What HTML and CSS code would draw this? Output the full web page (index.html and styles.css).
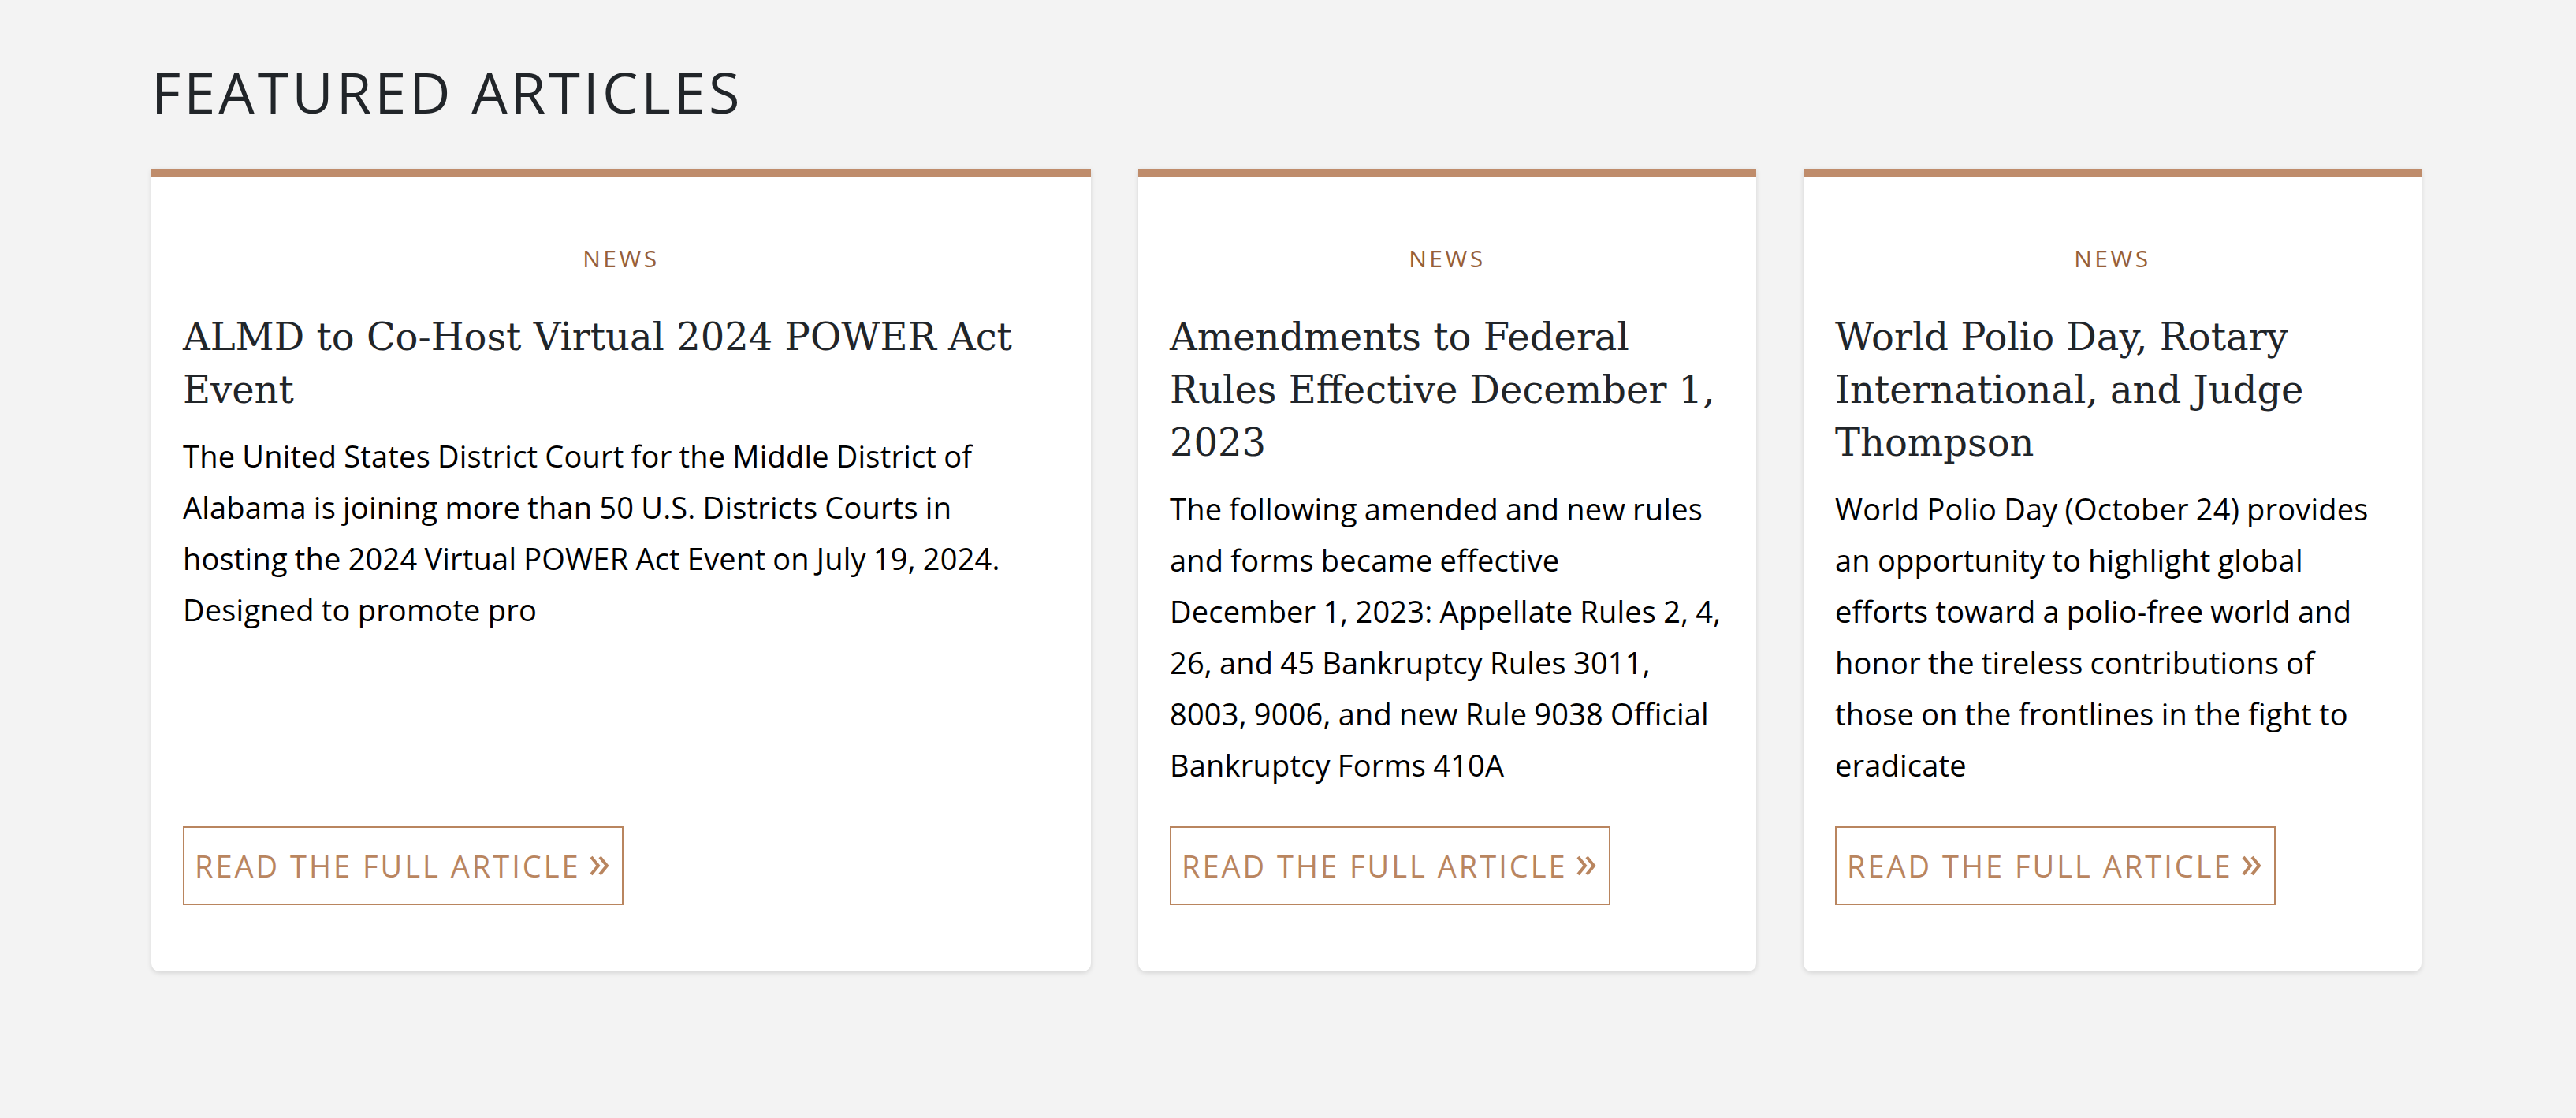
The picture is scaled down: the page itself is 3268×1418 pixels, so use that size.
FILE: index.html
```html
<!DOCTYPE html>
<html lang="en">
<head>
<meta charset="utf-8">
<title>Featured Articles</title>
<link rel="stylesheet" href="styles.css">
</head>
<body>
<section class="featured">
  <h2 class="featured-title">FEATURED ARTICLES</h2>
  <div class="cards">
    <article class="card">
      <div class="card-category">NEWS</div>
      <h3 class="card-title">ALMD to Co-Host Virtual 2024 POWER Act Event</h3>
      <p class="card-text">The United States District Court for the Middle District of Alabama is joining more than 50 U.S. Districts Courts in hosting the 2024 Virtual POWER Act Event on July 19, 2024. Designed to promote pro</p>
      <a class="card-button" href="#">READ THE FULL ARTICLE <svg class="chev" viewBox="0 0 26 28" aria-hidden="true"><polyline points="3,3 12,14 3,25"/><polyline points="14,3 23,14 14,25"/></svg></a>
    </article>
    <article class="card">
      <div class="card-category">NEWS</div>
      <h3 class="card-title">Amendments to Federal Rules Effective December 1, 2023</h3>
      <p class="card-text">The following amended and new rules and forms became effective December&nbsp;1,&nbsp;2023: Appellate Rules 2, 4, 26, and 45 Bankruptcy Rules 3011, 8003, 9006, and new Rule 9038 Official Bankruptcy Forms 410A</p>
      <a class="card-button" href="#">READ THE FULL ARTICLE <svg class="chev" viewBox="0 0 26 28" aria-hidden="true"><polyline points="3,3 12,14 3,25"/><polyline points="14,3 23,14 14,25"/></svg></a>
    </article>
    <article class="card">
      <div class="card-category">NEWS</div>
      <h3 class="card-title">World Polio Day, Rotary International, and Judge Thompson</h3>
      <p class="card-text">World Polio Day (October 24) provides an opportunity to highlight global efforts toward a polio-free world and honor the tireless contributions of those on the frontlines in the fight to eradicate</p>
      <a class="card-button" href="#">READ THE FULL ARTICLE <svg class="chev" viewBox="0 0 26 28" aria-hidden="true"><polyline points="3,3 12,14 3,25"/><polyline points="14,3 23,14 14,25"/></svg></a>
    </article>
  </div>
</section>
</body>
</html>
```

FILE: styles.css
```css
html, body {
  margin: 0;
  padding: 0;
  background: #f3f3f3;
}

body {
  font-family: "Open Sans", "Noto Sans", sans-serif;
  color: #000;
}

.featured {
  padding: 73px 196px 100px 192px;
}

.featured-title {
  margin: 0 0 55px;
  font-family: "Open Sans", "Noto Sans", sans-serif;
  font-weight: 400;
  font-size: 72px;
  line-height: 86px;
  letter-spacing: 4px;
  color: #212529;
}

.cards {
  display: grid;
  grid-template-columns: 1192px 784px 784px;
  column-gap: 60px;
  align-items: stretch;
}

.card {
  display: flex;
  flex-direction: column;
  background: #fff;
  border-top: 10px solid #bf8c6b;
  border-radius: 0 0 10px 10px;
  box-shadow: 0 2px 6px rgba(0, 0, 0, 0.13);
  padding: 81px 40px 84px;
}

.card-category {
  text-align: center;
  font-size: 30px;
  line-height: 45px;
  letter-spacing: 3.5px;
  color: #975f39;
}

.card-title {
  margin: 44px 0 0;
  font-family: "DejaVu Serif", "Liberation Serif", serif;
  font-weight: 400;
  font-size: 48px;
  line-height: 67px;
  color: #212529;
}

.card-text {
  margin: 18px 0 45px;
  font-size: 38px;
  line-height: 65px;
  letter-spacing: 0.2px;
  word-spacing: -1px;
  color: #000;
}

.card-button {
  margin-top: auto;
  align-self: flex-start;
  display: inline-flex;
  align-items: center;
  gap: 10px;
  padding: 21px 16px 21px 13px;
  border: 2px solid #b9855f;
  color: #b9855f;
  text-decoration: none;
  font-size: 38px;
  line-height: 54px;
  letter-spacing: 3px;
}

.chev {
  width: 26px;
  height: 28px;
  fill: none;
  stroke: #b9855f;
  stroke-width: 4;
}
```
